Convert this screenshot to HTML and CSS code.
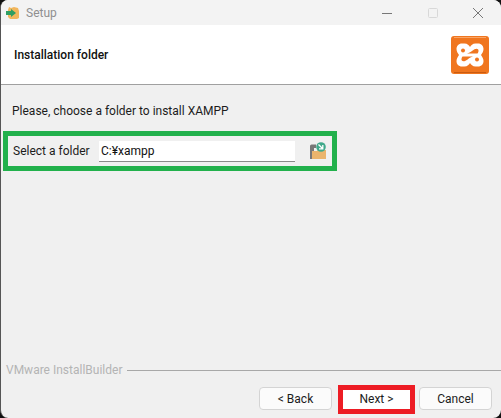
FILE: index.html
```html
<!DOCTYPE html>
<html lang="en">
  <head>
    <meta charset="UTF-8" />
    <title>Setup</title>
    <link rel="stylesheet" href="styles.css">
  </head>
  <body>
    <div class="window">
      <div class="titlebar">
        <svg class="app-icon" width="16" height="16" viewBox="0 0 16 16">
          <path d="M4 2l2 1 3-1 4 1 1 3v7l-2 1H5l-2-2V5z" fill="#f2b65c" />
          <path d="M1 6h5V4l5 4-5 4v-2H1z" fill="#2f9e62" />
        </svg>
        <span class="title">Setup</span>
        <div class="window-controls">
          <svg width="10" height="10" viewBox="0 0 10 10"><path d="M0 5.500h10" stroke="#777" stroke-width="1" /></svg>
          <svg width="10" height="10" viewBox="0 0 10 10"><rect x="0.500" y="0.500" width="9" height="9" rx="1" fill="none" stroke="#d8d8d8" /></svg>
          <svg width="10" height="10" viewBox="0 0 10 10"><path d="M0 0l10 10M10 0L0 10" stroke="#777" stroke-width="1" /></svg>
        </div>
      </div>

      <div class="header">
        <h1>Installation folder</h1>
        <svg class="logo" width="38" height="38" viewBox="0 0 38 38">
          <rect width="38" height="38" rx="3" fill="#f0761f" />
          <path d="M3 1.500h32" stroke="#f9a566" stroke-width="1" />
          <path d="M3 36.500h32" stroke="#c95c12" stroke-width="1" />
          <path d="M11 7.500h2.500c3 0 4.500 2 5.500 3.500 1-1.500 2.500-3.500 5.500-3.500H27c3.500 0 5.500 2.500 5.500 5.500 0 2.500-1.500 4.500-2.500 6 1 1.500 2.500 3.500 2.500 6 0 3-2 5.500-5.500 5.500h-2.500c-3 0-4.500-2-5.500-3.500-1 1.500-2.500 3.500-5.500 3.500H11c-3.500 0-5.500-2.500-5.500-5.500 0-2.500 1.500-4.500 2.500-6-1-1.500-2.500-3.500-2.500-6 0-3 2-5.500 5.500-5.500z" fill="#fff" />
          <circle cx="12" cy="14.500" r="2" fill="#f0761f" />
          <path d="M16 17.500c3-.5 5-3 7.500-4.300 1.500-.7 3-.7 3.700.2.700 1 .3 2.800-.7 4.100z" fill="#f0761f" />
          <circle cx="26" cy="23.500" r="2" fill="#f0761f" />
          <path d="M22 20.500c-3 .5-5 3-7.500 4.300-1.500.7-3 .7-3.700-.2-.7-1-.3-2.800.7-4.100z" fill="#f0761f" />
        </svg>
      </div>

      <div class="content">
        <p class="intro">Please, choose a folder to install XAMPP</p>
        <div class="folder-row">
          <label class="folder-label">Select a folder</label>
          <div class="folder-input">C:¥xampp</div>
          <svg class="folder-icon" width="18" height="18" viewBox="0 0 18 18">
            <path d="M1 17V4a1.500 1.500 0 0 1 1.500-1.500H7V6H5v11z" fill="#777" />
            <path d="M3 9h5l1-1h8v9H3z" fill="#eab46c" />
            <circle cx="12" cy="5" r="4.800" fill="#3fa98a" />
            <path d="M9.500 2.500l4 4M13.800 3v3.800H10" fill="none" stroke="#fff" stroke-width="1.300" />
          </svg>
        </div>
      </div>

      <div class="brand">
        <span>VMware InstallBuilder</span>
        <div class="brand-line"></div>
      </div>

      <div class="actions">
        <button class="button">&lt; Back</button>
        <button class="button button-next">Next &gt;</button>
        <button class="button">Cancel</button>
      </div>
    </div>
  </body>
</html>
```

FILE: styles.css
```css
* {
  margin: 0;
  padding: 0;
  box-sizing: border-box;
}

html,
body {
  width: 501px;
  height: 418px;
  overflow: hidden;
  background-color: #111;
}

body {
  font-family: Roboto, "Noto Sans", sans-serif;
  font-size: 12px;
  color: #1c1c1c;
}

.window {
  width: 501px;
  height: 418px;
  display: flex;
  flex-direction: column;
  background-color: #f0f0f0;
  border-left: 1px solid #555;
  border-radius: 8px;
  overflow: hidden;
}

.titlebar {
  height: 25px;
  display: flex;
  align-items: center;
  padding-left: 4px;
  background-color: #f3f3f3;
}

.title {
  margin-left: 5px;
  color: #8f8f8f;
}

.window-controls {
  margin-left: auto;
  width: 119px;
  padding-right: 18px;
  display: flex;
  justify-content: space-between;
  align-items: center;
}

.header {
  height: 60px;
  display: flex;
  align-items: center;
  justify-content: space-between;
  padding: 0 12px 0 13px;
  background-color: white;
  border-bottom: 1px solid #a0a0a0;
}

.header h1 {
  font-size: 12px;
  font-weight: 500;
  color: #111;
}

.content {
  flex: 1;
  padding: 18px 0 0 2px;
}

.intro {
  margin-left: 9px;
  margin-bottom: 12px;
  line-height: 16px;
}

.folder-row {
  width: 334px;
  height: 40px;
  display: flex;
  align-items: center;
  padding-left: 5px;
  border: 5px solid #22b14c;
}

.folder-label {
  width: 86px;
}

.folder-input {
  width: 196px;
  height: 21px;
  padding-left: 2px;
  line-height: 20px;
  color: #111;
  background-color: white;
  border-bottom: 1px solid #8a8a8a;
}

.folder-icon {
  margin-left: 14px;
}

.brand {
  display: flex;
  align-items: center;
  gap: 5px;
  height: 16px;
  padding-left: 5px;
  color: #b4b4b4;
}

.brand-line {
  flex: 1;
  height: 1px;
  background-color: #a8a8a8;
}

.actions {
  height: 40px;
  display: flex;
  justify-content: flex-end;
  align-items: flex-start;
  padding: 9px 9px 0 0;
  gap: 4px;
}

.button {
  width: 73px;
  height: 23px;
  font-family: inherit;
  font-size: 12px;
  color: #1c1c1c;
  background-color: #fbfbfb;
  border: 1px solid #d4d4d4;
  border-radius: 4px;
}

.button-next {
  width: 77px;
  height: 29px;
  margin: -2px 0 0 2px;
  padding-bottom: 2px;
  background-color: white;
  border: 5px solid #ed1c24;
  border-radius: 0;
}
```
